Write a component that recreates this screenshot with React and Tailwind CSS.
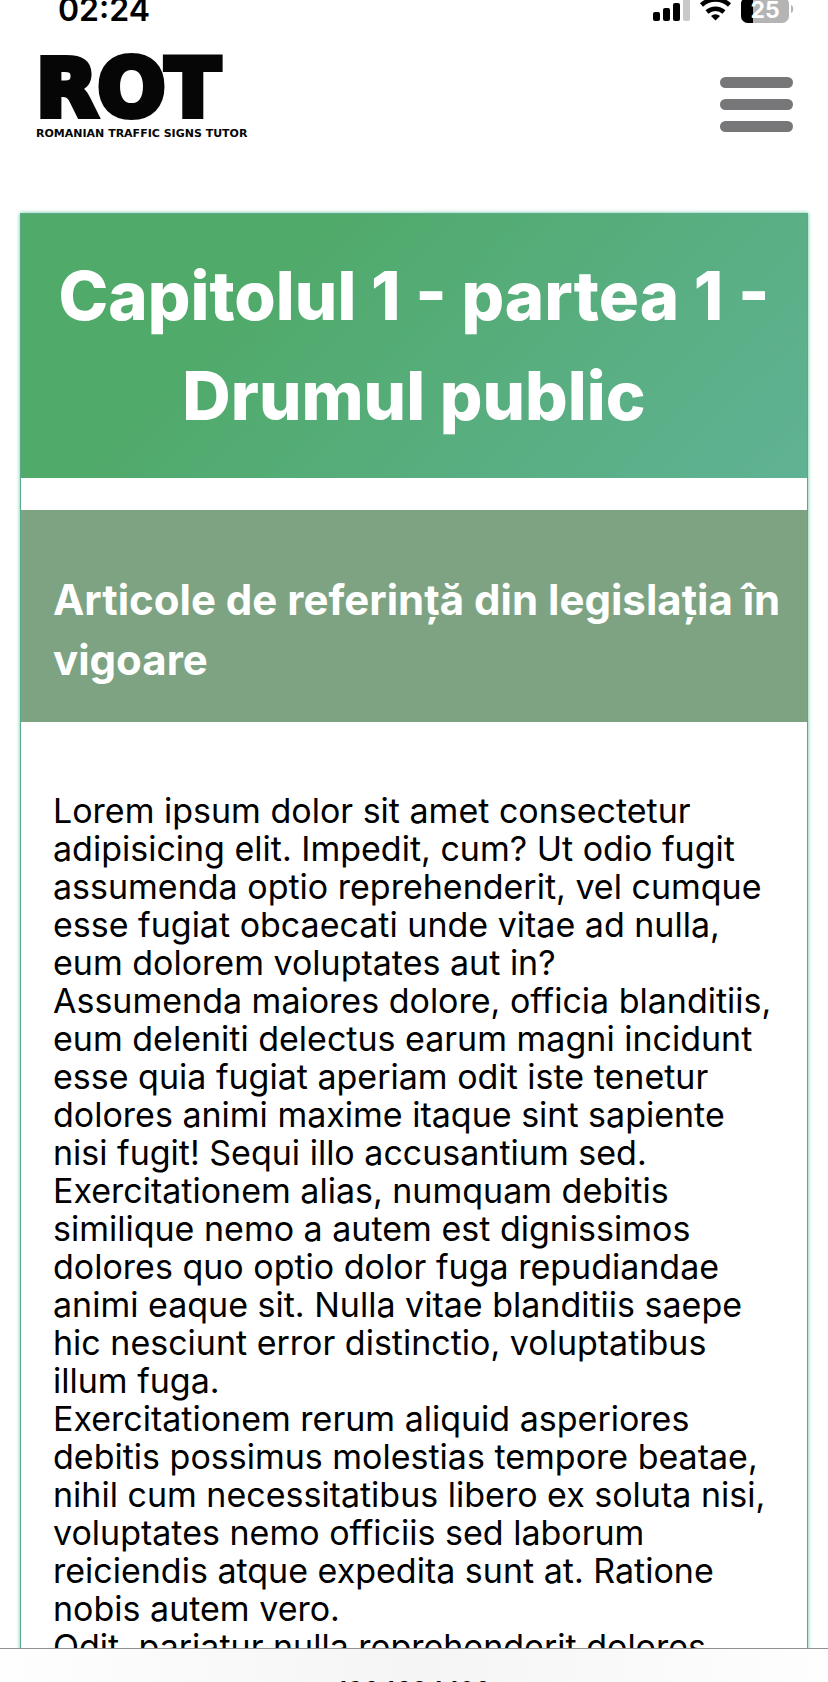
const bodyLines = [
  "Lorem ipsum dolor sit amet consectetur",
  "adipisicing elit. Impedit, cum? Ut odio fugit",
  "assumenda optio reprehenderit, vel cumque",
  "esse fugiat obcaecati unde vitae ad nulla,",
  "eum dolorem voluptates aut in?",
  "Assumenda maiores dolore, officia blanditiis,",
  "eum deleniti delectus earum magni incidunt",
  "esse quia fugiat aperiam odit iste tenetur",
  "dolores animi maxime itaque sint sapiente",
  "nisi fugit! Sequi illo accusantium sed.",
  "Exercitationem alias, numquam debitis",
  "similique nemo a autem est dignissimos",
  "dolores quo optio dolor fuga repudiandae",
  "animi eaque sit. Nulla vitae blanditiis saepe",
  "hic nesciunt error distinctio, voluptatibus",
  "illum fuga.",
  "Exercitationem rerum aliquid asperiores",
  "debitis possimus molestias tempore beatae,",
  "nihil cum necessitatibus libero ex soluta nisi,",
  "voluptates nemo officiis sed laborum",
  "reiciendis atque expedita sunt at. Ratione",
  "nobis autem vero.",
  "Odit, pariatur nulla reprehenderit dolores",
];

function StatusBar() {
  return (
    <div className="flex h-6 shrink-0 items-start justify-between overflow-hidden pr-[34px] pl-[58px]">
      <span className="text-[32px] leading-5 font-semibold text-black">02:24</span>
      <svg width="142" height="24" viewBox="652 0 142 24" aria-hidden="true">
        <g fill="#000">
          <rect x="653" y="12" width="7" height="9" rx="2" />
          <rect x="663" y="8" width="7" height="13" rx="2" />
          <rect x="673" y="3" width="7" height="18" rx="2" />
        </g>
        <rect x="683" y="-3" width="7" height="24" rx="2" fill="#c9c9c9" />
        <g fill="none" stroke="#000" strokeWidth="4.500">
          <path d="M701.500 5a20.500 20.500 0 0 1 28 0" />
          <path d="M707 12a12.500 12.500 0 0 1 17 0" />
        </g>
        <path d="M715.500 20.500l-4.500-4.500a6.500 6.500 0 0 1 9 0z" fill="#000" />
        <clipPath id="battery">
          <rect x="741" y="-3" width="48" height="26" rx="7" />
        </clipPath>
        <g clipPath="url(#battery)">
          <rect x="741" y="-3" width="48" height="26" fill="#b4b4b4" />
          <rect x="741" y="-3" width="12" height="26" fill="#000" />
        </g>
        <path d="M791 5c3 1 3 7 0 8z" fill="#b4b4b4" />
        <text x="765" y="18" textAnchor="middle" fill="#fff" className="text-[23px] font-bold">25</text>
      </svg>
    </div>
  );
}

export default function App() {
  return (
    <div className="flex h-screen flex-col overflow-hidden bg-white font-['Inter',sans-serif]">
      <StatusBar />
      <header className="flex h-[118px] shrink-0 items-start justify-between pt-9 pr-[35px] pl-9">
        <a href="#" className="block font-['DejaVu_Sans',sans-serif] font-bold text-[#060606]">
          <span className="block text-[80px] leading-[58px] [-webkit-text-stroke:6px_#060606]">ROT</span>
          <span className="mt-2 block text-[11px] leading-4">ROMANIAN TRAFFIC SIGNS TUTOR</span>
        </a>
        <button type="button" aria-label="Meniu" className="mt-[17px] flex w-[73px] flex-col gap-[11px]">
          <span className="h-[11px] rounded-full bg-[#777779]" />
          <span className="h-[11px] rounded-full bg-[#777779]" />
          <span className="h-[11px] rounded-full bg-[#777779]" />
        </button>
      </header>
      <main className="mt-[67px] min-h-0 flex-1 overflow-hidden px-5 pt-1">
        <article className="border border-[#5aa98c] shadow-[0_0_4px_#5fc79c]">
          <h1 className="bg-linear-135 from-[#50aa6a] from-30% to-[#60b294] py-8 text-center text-[67px] leading-[100px] font-extrabold whitespace-nowrap text-white">
            Capitolul 1 - partea 1 -<br />Drumul public
          </h1>
          <h2 className="mt-8 bg-[#7ea382] pt-[60px] pb-8 pl-8 text-[42px] leading-[60px] font-bold whitespace-nowrap text-white">
            Articole de referință din legislația în<br />vigoare
          </h2>
          <p className="pt-[70px] pl-8 text-[34px] leading-[38px] whitespace-nowrap text-black">
            {bodyLines.map((line) => (
              <span key={line}>{line}<br /></span>
            ))}
          </p>
        </article>
      </main>
      <footer className="h-[34px] shrink-0 overflow-hidden border-t border-[#919191] bg-linear-to-r from-[#fefefe] via-[#f5f5f5] to-[#fefefe] pt-7 text-center text-[26px] leading-7 text-black">
        192.168.1.102
      </footer>
    </div>
  );
}
